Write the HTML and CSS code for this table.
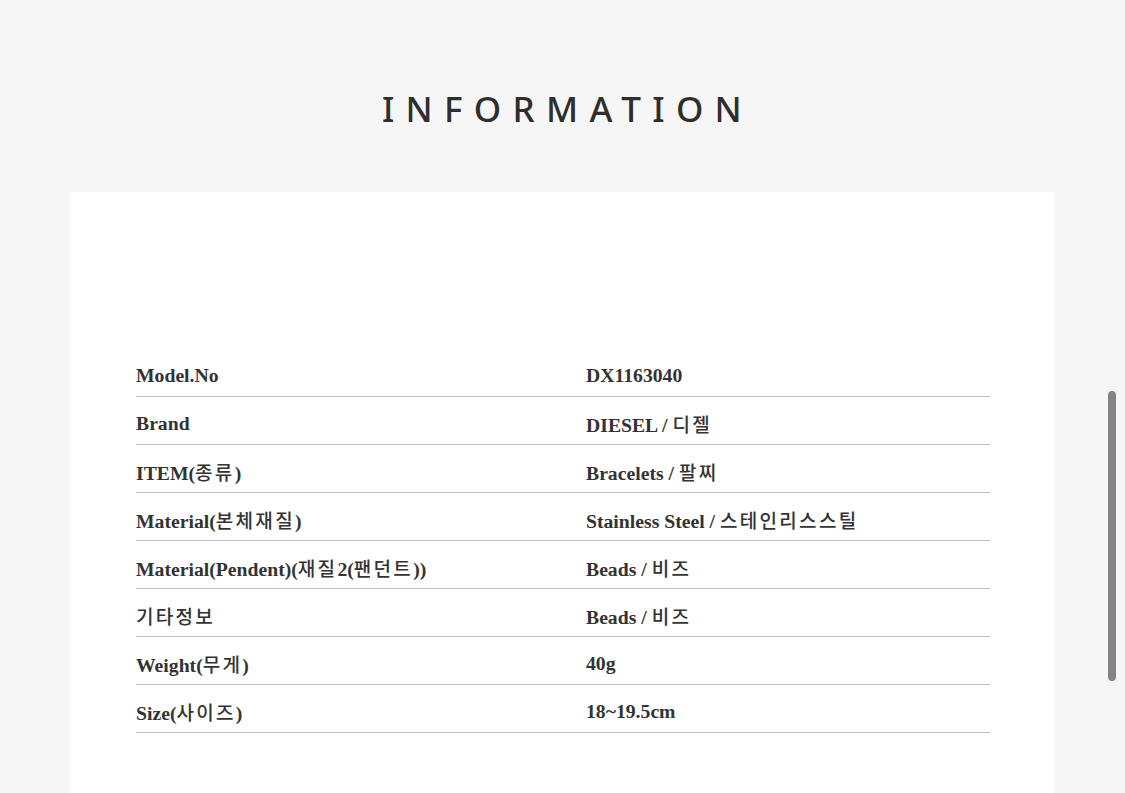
FILE: index.html
```html
<!DOCTYPE html>
<html lang="ko">
<head>
<meta charset="utf-8">
<link rel="stylesheet" href="styles.css">
</head>
<body>
<div class="page">
  <h1 class="title">INFORMATION</h1>
  <section class="card">
    <div class="table">
      <div class="row"><div class="k">Model.No</div><div class="v">DX1163040</div></div>
      <div class="row"><div class="k">Brand</div><div class="v">DIESEL / <span class="ko">디젤</span></div></div>
      <div class="row"><div class="k">ITEM(<span class="ko">종류</span>)</div><div class="v">Bracelets / <span class="ko">팔찌</span></div></div>
      <div class="row"><div class="k">Material(<span class="ko">본체재질</span>)</div><div class="v">Stainless Steel / <span class="ko">스테인리스스틸</span></div></div>
      <div class="row"><div class="k">Material(Pendent)(<span class="ko">재질</span>2(<span class="ko">팬던트</span>))</div><div class="v">Beads / <span class="ko">비즈</span></div></div>
      <div class="row"><div class="k"><span class="ko">기타정보</span></div><div class="v">Beads / <span class="ko">비즈</span></div></div>
      <div class="row"><div class="k">Weight(<span class="ko">무게</span>)</div><div class="v">40g</div></div>
      <div class="row"><div class="k">Size(<span class="ko">사이즈</span>)</div><div class="v">18~19.5cm</div></div>
    </div>
  </section>
</div>
<div class="scrollbar"></div>
</body>
</html>
```
FILE: styles.css
```css
html, body {
  margin: 0;
  padding: 0;
  background: #f6f6f6;
  height: 793px;
  overflow: hidden;
}
.page {
  padding: 0 71px 0 70px;
}
.title {
  margin: 0;
  height: 192px;
  display: flex;
  align-items: center;
  justify-content: center;
  padding-top: 24px;
  box-sizing: border-box;
  font-family: "Noto Sans", sans-serif;
  font-weight: 500;
  font-size: 35px;
  letter-spacing: 11.3px;
  text-indent: 11px;
  color: #2e2e2e;
}
.card {
  background: #fff;
  padding: 157px 64px 80px 66px;
  min-height: 700px;
}
.table {
  display: flex;
  flex-direction: column;
}
.row {
  display: grid;
  grid-template-columns: 450px 1fr;
  height: 48px;
  align-items: center;
  border-bottom: 1px solid #c0c0c0;
  box-sizing: border-box;
  font-family: "Liberation Serif", serif;
  font-weight: bold;
  font-size: 19.7px;
  color: #333;
  padding-top: 6px;
}
.ko {
  font-family: "Noto Sans CJK KR", sans-serif;
  font-weight: 500;
  font-size: 19px;
  letter-spacing: 2.3px;
}
.scrollbar {
  position: absolute;
  left: 1108px;
  top: 391px;
  width: 8px;
  height: 290px;
  border-radius: 4px;
  background: #858585;
}
```
